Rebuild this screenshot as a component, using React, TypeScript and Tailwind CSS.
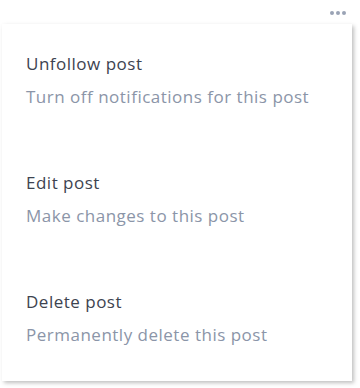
import { useState } from "react";

type MenuItem = {
  title: string;
  hint: string;
};

const ITEMS: MenuItem[] = [
  { title: "Unfollow post", hint: "Turn off notifications for this post" },
  { title: "Edit post", hint: "Make changes to this post" },
  { title: "Delete post", hint: "Permanently delete this post" },
];

export default function App() {
  const [open, setOpen] = useState(true);

  return (
    <div className="relative h-[388px] w-[360px] bg-white font-['Open_Sans',sans-serif]">
      {/* trigger */}
      <div className="flex justify-end pr-[14px] pt-[10px]">
        <button
          onClick={() => setOpen(!open)}
          className="flex h-[5px] items-center gap-[2px]"
          aria-label="More"
        >
          <span className="h-[4px] w-[4px] rounded-full bg-[#9aa3b5]" />
          <span className="h-[4px] w-[4px] rounded-full bg-[#9aa3b5]" />
          <span className="h-[4px] w-[4px] rounded-full bg-[#9aa3b5]" />
        </button>
      </div>

      {open && (
        <div className="absolute left-[2px] top-[24px] w-[350px] bg-white shadow-[2px_2px_4px_rgba(0,0,0,0.25)]">
          {ITEMS.map((it) => (
            <button
              key={it.title}
              className="block w-full pb-[34px] pl-[24px] pt-[28px] text-left tracking-[0.5px]"
            >
              <div className="text-[17px] leading-[24px] text-[#3d4350]">{it.title}</div>
              <div className="mt-[9px] text-[17px] leading-[24px] text-[#8b95a8]">{it.hint}</div>
            </button>
          ))}
        </div>
      )}
    </div>
  );
}
